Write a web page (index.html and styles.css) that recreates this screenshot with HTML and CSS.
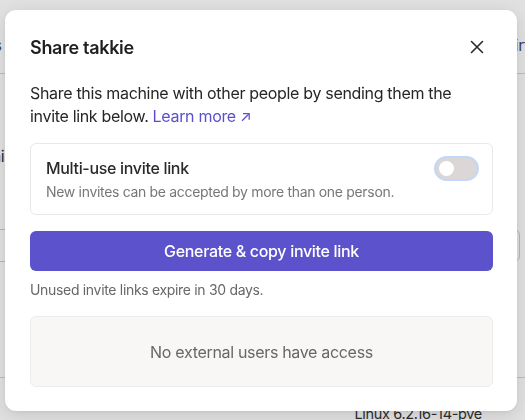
FILE: index.html
```html
<!DOCTYPE html>
<html lang="en">
<head>
<meta charset="utf-8">
<title>Share takkie</title>
<link rel="stylesheet" href="styles.css">
</head>
<body>
<div class="page">
  <div class="page-tabs">
    <span class="tab">Settings</span>
    <span class="tab tab-right">Airflow</span>
  </div>
  <div class="page-body">
    <div class="page-label">Domain</div>
    <div class="page-input">machine name</div>
  </div>
  <div class="page-footer">
    <span class="os">Linux 6.2.16-14-pve</span>
  </div>
</div>

<div class="overlay">
  <div class="dialog" role="dialog" aria-labelledby="dlg-title">
    <div class="dialog-header">
      <h2 id="dlg-title" class="dialog-title">Share takkie</h2>
      <button class="close-btn" aria-label="Close">
        <svg width="14" height="14" viewBox="0 0 14 14" fill="none" stroke="#2a2a2a" stroke-width="1.6" stroke-linecap="round"><path d="M1.5 1.5 L12.5 12.5 M12.5 1.5 L1.5 12.5"/></svg>
      </button>
    </div>
    <p class="intro">Share this machine with other people by sending them the invite link below. <a class="learn" href="#">Learn more <span class="arrow">↗</span></a></p>
    <div class="option-card">
      <div class="option-text">
        <div class="option-title">Multi-use invite link</div>
        <div class="option-desc">New invites can be accepted by more than one person.</div>
      </div>
      <span class="toggle"><span class="knob"></span></span>
    </div>
    <button class="primary-btn">Generate &amp; copy invite link</button>
    <p class="note">Unused invite links expire in 30 days.</p>
    <div class="empty-box">No external users have access</div>
  </div>
</div>
</body>
</html>
```

FILE: styles.css
```css
* { box-sizing: border-box; }
html, body { margin: 0; padding: 0; }
body {
  width: 525px;
  height: 420px;
  overflow: hidden;
  background: #ffffff;
  font-family: Inter, "Noto Sans", "Liberation Sans", sans-serif;
  letter-spacing: -0.02em;
  color: #222;
}

/* background page (mostly hidden) */
.page {
  height: 420px;
  display: flex;
  flex-direction: column;
}
.page-tabs {
  height: 74px;
  flex-shrink: 0;
  border-bottom: 1px solid #d6d6d6;
  display: flex;
  padding: 35px 0 0;
  font-size: 16px;
  color: #34507e;
  white-space: nowrap;
}
.tab { margin-left: -57px; }
.tab-right { margin-left: auto; margin-right: -30px; }
.page-body {
  flex: 1;
  padding: 72px 0 0;
  border-bottom: 1px solid #d6d6d6;
}
.page-label {
  font-size: 16px;
  color: #2a2a3a;
  margin-left: -42px;
}
.page-input {
  margin: 63px 5px 0 -20px;
  height: 33px;
  border: 1px solid #cfcfcf;
  border-radius: 6px;
  padding: 6px 26px;
  color: #888;
  font-size: 16px;
}
.page-footer {
  height: 42px;
  flex-shrink: 0;
  display: flex;
  justify-content: flex-end;
  padding: 27px 43px 0 0;
  font-size: 14.5px;
  color: #333;
  white-space: nowrap;
}

/* overlay + dialog */
.overlay {
  position: fixed;
  inset: 0;
  background: rgba(0, 0, 0, 0.12);
  padding: 10px 0 0 5px;
}
.dialog {
  width: 512px;
  background: #fff;
  border-radius: 11px;
  box-shadow: 0 4px 18px rgba(0, 0, 0, 0.12), 0 1px 3px rgba(0, 0, 0, 0.06);
  padding: 23px 24px 24px 25px;
  display: flex;
  flex-direction: column;
}
.dialog > * { flex-shrink: 0; }
.dialog-header {
  height: 28px;
  display: flex;
  align-items: center;
  justify-content: space-between;
}
.dialog-title {
  margin: 0;
  font-size: 18px;
  font-weight: 600;
  color: #1f1f1f;
}
.close-btn {
  border: 0;
  background: none;
  padding: 0;
  width: 14px;
  height: 14px;
  margin-right: 9px;
  display: flex;
}
.intro {
  margin: 21px 0 0;
  font-size: 16px;
  line-height: 23px;
  color: #262626;
}
.learn {
  color: #5a4fcf;
  text-decoration: none;
}
.arrow { font-size: 15px; }
.option-card {
  margin-top: 15px;
  height: 72px;
  border: 1px solid #e8e8e8;
  border-radius: 6px;
  padding: 13px 15px 0 15px;
  display: flex;
  justify-content: space-between;
  align-items: flex-start;
}
.option-title {
  font-size: 16px;
  font-weight: 500;
  line-height: 22px;
  color: #2a2a2a;
}
.option-desc {
  margin-top: 3px;
  font-size: 14px;
  line-height: 20px;
  color: #777;
}
.toggle {
  margin-top: 1px;
  width: 41px;
  height: 21px;
  border-radius: 11px;
  background: #dcd6d6;
  box-shadow: 0 0 0 2px #c2d8fb;
  padding: 3px;
  display: flex;
}
.knob {
  width: 15px;
  height: 15px;
  border-radius: 50%;
  background: #fff;
}
.primary-btn {
  margin-top: 16px;
  height: 40px;
  border: 0;
  border-radius: 6px;
  background: #5b52cc;
  color: #fff;
  font-family: inherit;
  letter-spacing: inherit;
  font-size: 16px;
  font-weight: 500;
}
.note {
  margin: 9px 0 0;
  font-size: 14px;
  line-height: 20px;
  color: #676767;
}
.empty-box {
  margin-top: 16px;
  height: 71px;
  border: 1px solid #ececea;
  border-radius: 6px;
  background: #f8f7f6;
  display: flex;
  align-items: center;
  justify-content: center;
  font-size: 16px;
  color: #676767;
}
```
